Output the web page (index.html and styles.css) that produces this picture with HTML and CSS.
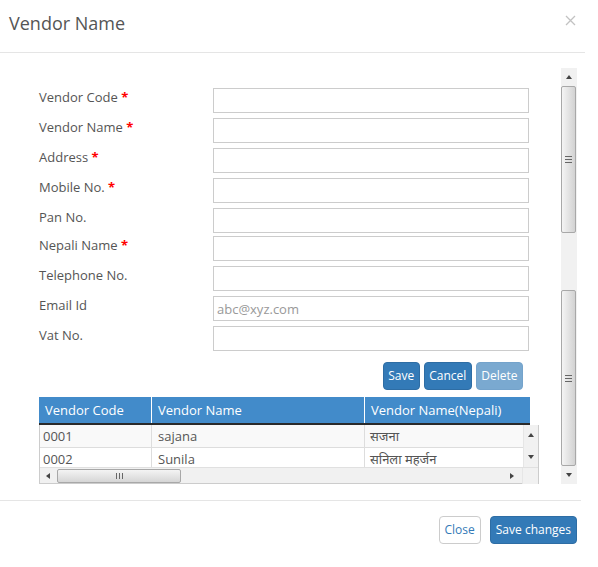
FILE: index.html
```html
<!DOCTYPE html>
<html>
<head>
<meta charset="utf-8">
<link rel="stylesheet" href="styles.css">
</head>
<body>
<div class="modal">
  <div class="modal-header">
    <h4 class="modal-title">Vendor Name</h4>
    <svg class="close" width="11" height="11" viewBox="0 0 11 11"><path d="M1 1L10 10M10 1L1 10" stroke="#c2c2c2" stroke-width="1.3" fill="none"/></svg>
  </div>
  <div class="modal-body">
    <div class="content">
      <div class="form">
        <div class="row"><label class="lbl">Vendor Code <span class="req">*</span></label><input class="inp" type="text"></div>
        <div class="row"><label class="lbl">Vendor Name <span class="req">*</span></label><input class="inp" type="text"></div>
        <div class="row"><label class="lbl">Address <span class="req">*</span></label><input class="inp" type="text"></div>
        <div class="row"><label class="lbl">Mobile No. <span class="req">*</span></label><input class="inp" type="text"></div>
        <div class="row row-tight"><label class="lbl">Pan No.</label><input class="inp" type="text"></div>
        <div class="row"><label class="lbl">Nepali Name <span class="req">*</span></label><input class="inp" type="text"></div>
        <div class="row"><label class="lbl">Telephone No.</label><input class="inp" type="text"></div>
        <div class="row"><label class="lbl">Email Id</label><input class="inp" type="text" placeholder="abc@xyz.com"></div>
        <div class="row"><label class="lbl">Vat No.</label><input class="inp" type="text"></div>
      </div>
      <div class="actions">
        <button class="btn btn-primary">Save</button>
        <button class="btn btn-primary">Cancel</button>
        <button class="btn btn-primary btn-disabled">Delete</button>
      </div>
      <div class="grid">
        <div class="grid-head">
          <div class="th c1">Vendor Code</div>
          <div class="th c2">Vendor Name</div>
          <div class="th c3">Vendor Name(Nepali)</div>
        </div>
        <div class="grid-body">
          <div class="grid-main">
            <div class="rows">
              <div class="tr odd"><div class="td c1">0001</div><div class="td c2">sajana</div><div class="td c3">सजना</div></div>
              <div class="tr"><div class="td c1">0002</div><div class="td c2">Sunila</div><div class="td c3">सनिला महर्जन</div></div>
            </div>
            <div class="vbar-small">
              <span class="tri up"></span>
              <span class="tri down"></span>
            </div>
          </div>
          <div class="hbar">
            <span class="tri left"></span>
            <div class="hthumb"><span class="hgrip"></span></div>
            <span class="hbar-fill"></span>
            <span class="tri right"></span>
            <span class="corner"></span>
          </div>
        </div>
      </div>
    </div>
    <div class="vbar">
      <div class="vbtn"><span class="tri up"></span></div>
      <div class="vthumb t1"><span class="vgrip"></span></div>
      <div class="vgap"></div>
      <div class="vthumb t2"><span class="vgrip"></span></div>
      <div class="vbtn"><span class="tri down"></span></div>
    </div>
  </div>
  <div class="modal-footer">
    <button class="btn btn-default">Close</button>
    <button class="btn btn-primary">Save changes</button>
  </div>
</div>
</body>
</html>
```

FILE: styles.css
```css
* { box-sizing: border-box; }
html, body { margin: 0; padding: 0; background: #fff; }
body { font-family: "Open Sans", "Noto Sans", "DejaVu Sans", sans-serif; font-size: 13px; color: #555; }

.modal { width: 585px; }

.modal-header {
  height: 53px;
  border-bottom: 1px solid #e5e5e5;
  display: flex;
  justify-content: space-between;
  align-items: flex-start;
  padding: 11px 9px 0 9px;
}
.modal-title { margin: 0; font-size: 18px; line-height: 24px; font-weight: 400; color: #555; }
.close { margin-top: 4px; margin-right: 0; }

.modal-body { display: flex; height: 447px; padding-left: 39px; }
.content { width: 500px; padding-top: 35px; }

.row { display: flex; align-items: flex-start; margin-bottom: 5px; }
.row-tight { margin-bottom: 3px; }
.row:last-child { margin-bottom: 0; }
.lbl { width: 174px; line-height: 18px; color: #555; }
.req { color: #f00; font-weight: 700; }
.inp {
  width: 316px; height: 25px; margin: 0;
  border: 1px solid #ccc; padding: 0 3px;
  font-family: inherit; font-size: 13px; color: #555; background: #fff; outline: none;
}
.inp::placeholder { color: #999; }

.actions { display: flex; justify-content: flex-end; gap: 4px; width: 484px; margin-top: 11px; }
.actions .btn { padding: 0 4.5px; }
.btn {
  height: 28px; margin: 0; padding: 0 5px;
  font-family: inherit; font-size: 12px; line-height: 26px;
  border-radius: 4px; border: 1px solid transparent; cursor: pointer;
}
.btn-primary { background: #337ab7; border-color: #2e6da4; color: #fff; }
.btn-disabled { background: #7aa9d0; border-color: #74a3cb; }
.btn-default { background: #fff; border-color: #ccc; color: #337ab7; }

.grid { margin-top: 7px; width: 500px; }
.grid-head { display: flex; width: 491px; height: 28px; background: #428bca; border-bottom: 2px solid #2a2a2a; }
.th { color: #fff; line-height: 26px; padding-left: 6px; white-space: nowrap; overflow: hidden; }
.grid-head .c2, .grid-head .c3 { border-left: 1px solid #fff; }
.c1 { width: 112px; }
.c2 { width: 213px; }
.c3 { width: 166px; }

.grid-body { border: 1px solid #ccc; border-top: 0; width: 500px; height: 59px; }
.grid-main { display: flex; height: 42px; }
.rows { width: 483px; overflow: hidden; }
.tr { display: flex; height: 23px; border-bottom: 1px solid #ddd; }
.tr.odd { background: #f9f9f9; }
.td { line-height: 22px; padding-left: 4px; white-space: nowrap; overflow: hidden; color: #555; }
.td.c1 { width: 111px; padding-left: 3px; }
.tr .c2, .tr .c3 { border-left: 1px solid #ddd; padding-left: 6px; }
.tr .c3 { width: 159px; padding-left: 5px; }

.vbar-small {
  width: 15px; height: 42px; background: #f1f1f1; border-left: 1px solid #e6e6e6;
  display: flex; flex-direction: column; justify-content: space-between; align-items: center;
  padding: 8px 0 8px;
}
.hbar { display: flex; align-items: center; height: 16px; background: #f1f1f1; border-top: 1px solid #e0e0e0; }
.hbar .left { margin-left: 6px; }
.hthumb {
  width: 124px; height: 14px; margin-left: 7px;
  border: 1px solid #a8a8a8; border-radius: 2px;
  background: linear-gradient(#f4f4f4, #d6d6d6);
  display: flex; align-items: center; justify-content: center;
}
.hgrip { width: 7px; height: 6px; background: repeating-linear-gradient(90deg, #666 0 1px, transparent 1px 3px); }
.hbar-fill { flex: 1; }
.hbar .right { margin-right: 8px; }
.corner { width: 16px; height: 16px; background: #f1f1f1; border-left: 1px solid #e6e6e6; }

.tri { display: block; width: 0; height: 0; border-style: solid; }
.tri.up { border-width: 0 3.5px 4px 3.5px; border-color: transparent transparent #444 transparent; }
.tri.down { border-width: 4px 3.5px 0 3.5px; border-color: #444 transparent transparent transparent; }
.tri.left { border-width: 3.5px 4px 3.5px 0; border-color: transparent #444 transparent transparent; }
.tri.right { border-width: 3.5px 0 3.5px 4px; border-color: transparent transparent transparent #444; }

.vbar {
  width: 16px; margin-left: 22px; margin-top: 15px; height: 416px;
  background: #f1f1f1; display: flex; flex-direction: column;
}
.vbtn { height: 18px; display: flex; align-items: center; justify-content: center; flex: none; }
.vthumb {
  width: 15px; margin-left: 0;
  border: 1px solid #a8a8a8; border-radius: 2px;
  background: linear-gradient(90deg, #f4f4f4, #d2d2d2);
  display: flex; align-items: center; justify-content: center; flex: none;
}
.t1 { height: 147px; }
.vgap { height: 57px; flex: none; }
.t2 { height: 176px; }
.vgrip { width: 7px; height: 7px; background: repeating-linear-gradient(180deg, #666 0 1px, transparent 1px 3px); }

.modal-footer {
  width: 581px; border-top: 1px solid #e5e5e5;
  display: flex; justify-content: flex-end; gap: 9px;
  padding: 15px 4px 0 0;
}
```
